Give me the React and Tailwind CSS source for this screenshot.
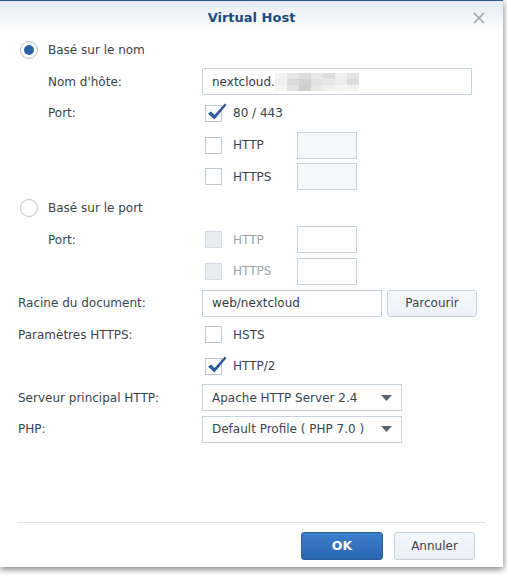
import React from "react";

const font = { fontFamily: '"DejaVu Sans", Verdana, sans-serif' };

function Radio({ checked }) {
  return (
    <span className="flex h-[18px] w-[18px] items-center justify-center rounded-full border border-[#b9c4cf] bg-white">
      {checked && <span className="h-[10px] w-[10px] rounded-full bg-[#2d62a8]" />}
    </span>
  );
}

function Check({ checked, disabled }) {
  return (
    <span
      className={
        "relative block h-[17px] w-[17px] border " +
        (disabled ? "border-[#d3dbe4] bg-[#e8edf4]" : "border-[#bcc6d0] bg-white")
      }
    >
      {checked && (
        <svg className="absolute -top-[4px] left-[1px]" width="20" height="20" viewBox="0 0 20 20">
          <path d="M1 11.5 L4 9.5 L7.5 13 L17.8 1.5 L19.5 3 L7.5 17.5 Z" fill="#2c5b9b" />
        </svg>
      )}
    </span>
  );
}

function Row({ label, indent, children }) {
  return (
    <div className="flex h-[31.6px] items-center">
      <div className={(indent ? "pl-[48px] " : "pl-[18px] ") + "w-[202px] shrink-0"}>{label}</div>
      <div className="flex items-center">{children}</div>
    </div>
  );
}

function Box({ w, children, className = "" }) {
  return (
    <div
      className={
        "flex h-[27px] items-center border border-[#c7d1dc] px-[9px] text-[#333c46] " + w + " " + className
      }
    >
      {children}
    </div>
  );
}

function Opt({ label, checked, disabled, field }) {
  return (
    <div className="flex items-center">
      <div className="ml-[3px]">
        <Check checked={checked} disabled={disabled} />
      </div>
      <span className={"ml-[11px] w-[64px] " + (disabled ? "text-[#9aa3ad]" : "")}>{label}</span>
      {field && <Box w={"w-[60px] " + (disabled ? "bg-white" : "bg-[#f5f7f9]")} />}
    </div>
  );
}

function Select({ value }) {
  return (
    <div className="flex h-[27px] w-[200px] items-center justify-between border border-[#c7d1dc] pl-[9px] pr-[9px]">
      <span>{value}</span>
      <svg width="11" height="6" viewBox="0 0 11 6">
        <path d="M0 0 H11 L5.5 6 Z" fill="#5a646e" />
      </svg>
    </div>
  );
}

const blur = [
  ["#f3f3f3", "#e6e6e6", "#dcdcdc", "#e9e9e9", "#dedede", "#f0f0f0", "#e4e4e4"],
  ["#eeeeee", "#dadada", "#d2d2d2", "#e3e3e3", "#e8e8e8", "#ececec", "#dcdcdc"],
  ["#f5f5f5", "#e2e2e2", "#cfcfcf", "#e9e9e9", "#f1f1f1", "#f4f4f4", "#f2f2f2"],
];

export default function App() {
  return (
    <div className="h-[575px] w-[507px] overflow-hidden bg-white" style={font}>
      <div className="flex h-[567px] w-[503px] flex-col bg-white text-[12px] text-[#3a444e] shadow-[0_2px_7px_rgba(0,0,0,0.55)]">
        <div className="relative flex h-[33px] shrink-0 items-center justify-center border-t border-[#2b5a94] bg-gradient-to-b from-[#e6ecf3] to-white pt-[1px]">
          <span className="text-[13px] font-bold text-[#1f4a80]">Virtual Host</span>
          <svg className="absolute right-[18px] top-[11px]" width="12" height="12" viewBox="0 0 12 12">
            <path d="M1 1 L11 11 M11 1 L1 11" stroke="#a0a4a8" strokeWidth="1.6" />
          </svg>
        </div>

        <div className="flex flex-col pt-[1.5px]">
          <div className="flex h-[31.6px] items-center gap-[10px] pl-[20px]">
            <Radio checked />
            <span>Basé sur le nom</span>
          </div>
          <Row label="Nom d'hôte:" indent>
            <Box w="w-[270px]">
              <span>nextcloud.</span>
              <span className="flex flex-col">
                {blur.map((r, i) => (
                  <span key={i} className="flex">
                    {r.map((c, j) => (
                      <span key={j} className="h-[6px] w-[12px]" style={{ background: c }} />
                    ))}
                  </span>
                ))}
              </span>
            </Box>
          </Row>
          <Row label="Port:" indent>
            <Opt label="80 / 443" checked />
          </Row>
          <Row>
            <Opt label="HTTP" field />
          </Row>
          <Row>
            <Opt label="HTTPS" field />
          </Row>
          <div className="flex h-[31.6px] items-center gap-[10px] pl-[20px]">
            <Radio />
            <span>Basé sur le port</span>
          </div>
          <Row label="Port:" indent>
            <Opt label="HTTP" disabled field />
          </Row>
          <Row>
            <Opt label="HTTPS" disabled field />
          </Row>
          <Row label="Racine du document:">
            <Box w="w-[180px]">web/nextcloud</Box>
            <button className="ml-[5px] h-[27px] w-[90px] rounded-[3px] border border-[#c6d0db] bg-gradient-to-b from-[#f7f9fb] to-[#edf1f6] text-[#3a444e]">
              Parcourir
            </button>
          </Row>
          <Row label="Paramètres HTTPS:">
            <Opt label="HSTS" />
          </Row>
          <Row>
            <Opt label="HTTP/2" checked />
          </Row>
          <Row label="Serveur principal HTTP:">
            <Select value="Apache HTTP Server 2.4" />
          </Row>
          <Row label="PHP:">
            <Select value="Default Profile ( PHP 7.0 )" />
          </Row>
        </div>

        <div className="mx-[17px] mt-auto border-t border-[#e0e4e8]" />
        <div className="flex justify-end gap-[11px] pb-[7px] pr-[28px] pt-[9px]">
          <button className="h-[28px] w-[82px] rounded-[3px] border border-[#2a5d9e] bg-gradient-to-b from-[#3b7fcc] to-[#2a66b0] text-[12.5px] font-semibold text-white">
            OK
          </button>
          <button className="h-[28px] w-[81px] rounded-[3px] border border-[#c6d0db] bg-gradient-to-b from-[#f5f8fb] to-[#e9eff6] text-[#3a444e]">
            Annuler
          </button>
        </div>
      </div>
    </div>
  );
}
